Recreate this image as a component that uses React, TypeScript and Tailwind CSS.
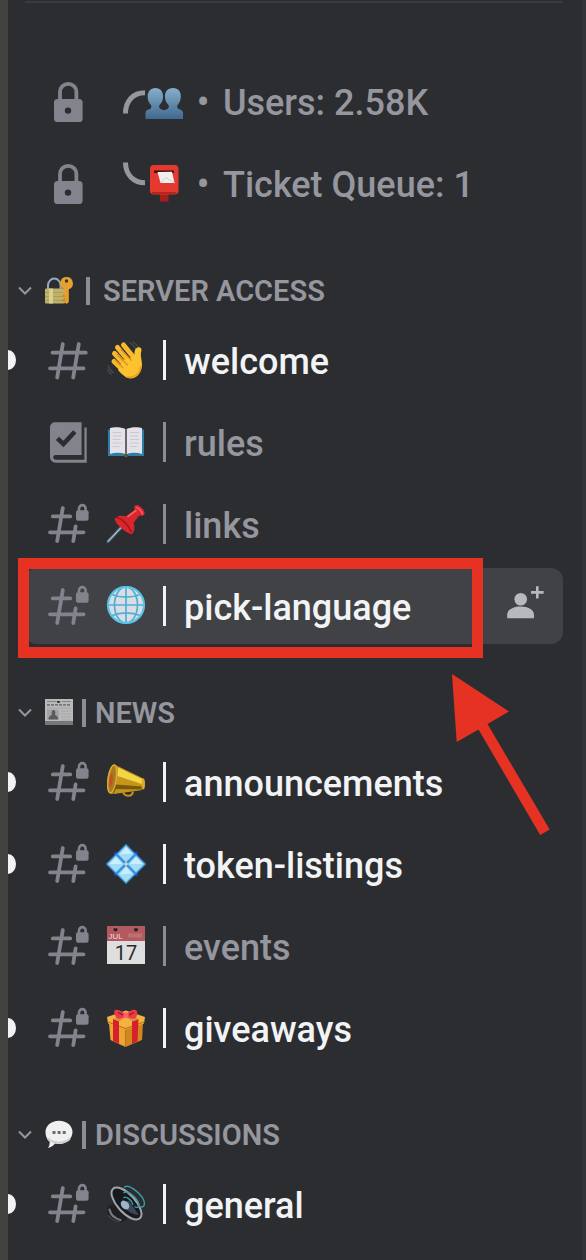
import React from "react";
import clsx from "clsx";

type IconProps = { children: React.ReactNode };

const ChannelIcon = ({ children }: IconProps) => (
  <svg viewBox="0 0 44 44" className="h-11 w-11 shrink-0 text-[#82838d]" fill="none" aria-hidden="true">
    {children}
  </svg>
);

const LockIcon = () => (
  <ChannelIcon>
    <path d="M14 22V12a8.2 8.2 0 0 1 16.4 0v10" stroke="currentColor" strokeWidth="3.8" />
    <rect x="8" y="19" width="28.6" height="23" rx="3.6" fill="currentColor" />
    <circle cx="22" cy="30.6" r="3.2" fill="#2c2d31" />
  </ChannelIcon>
);

const HashIcon = () => (
  <ChannelIcon>
    <path
      d="M16.8 6 11.2 39.5M32.8 6l-5.6 33.5M6.5 14.7h33.3M4 30.3h33.5"
      stroke="currentColor"
      strokeWidth="3.8"
      strokeLinecap="round"
    />
  </ChannelIcon>
);

const HashLockIcon = () => (
  <ChannelIcon>
    <path
      d="M16.8 6 11.2 39M29.6 24.5 27.3 39M6.8 14.4h17.4M4 30.3h33.5"
      stroke="currentColor"
      strokeWidth="3.8"
      strokeLinecap="round"
    />
    <path d="M33 10V6.4a3.3 3.3 0 0 1 6.6 0V10" stroke="currentColor" strokeWidth="2.6" />
    <rect x="30" y="8.2" width="12.6" height="10.6" rx="2" fill="currentColor" />
  </ChannelIcon>
);

const RulesIcon = () => (
  <ChannelIcon>
    <path
      d="M9 2.3h26.6v32.6H9.6a2.4 2.4 0 0 0 0 4.9h28.8V7.5h2.3v35.2H9.5A5.5 5.5 0 0 1 4 37.2V7.3a5 5 0 0 1 5-5Z"
      fill="currentColor"
    />
    <path d="m11.4 18.4 6 5.6L28.8 11.8" stroke="#2c2d31" strokeWidth="4.6" />
  </ChannelIcon>
);

const Emoji = ({ children }: IconProps) => (
  <svg viewBox="0 0 40 40" className="h-10 w-10 shrink-0" fill="none" aria-hidden="true">
    {children}
  </svg>
);

const Wave = () => (
  <Emoji>
    <g stroke="#4a4b4f" strokeWidth="1.2" strokeLinecap="round">
      <path d="M24 3c3 1.6 5 4 6 7M26.8 2c2.6 1.3 4.6 3.2 5.8 6M2.3 25.500c.7 3 2.400 5.400 5.200 7M1.400 29.500c.8 2 2 3.500 3.800 4.600" />
    </g>
    <g stroke="#f9b92d" strokeWidth="5" strokeLinecap="round">
      <path d="M17.500 5 29 19M11.500 7.500l15 18M8.500 13.500 22 28M8 21.500 19 32" />
    </g>
    <path
      d="M17 20 28 16.500c.8-1.700 0-4 1-6.500.8-2.300 3-3.300 5-2.600 1.900.7 1.700 2.800 1.100 4.600-1 3.500.8 7.600.9 12.500.1 8-5.200 14-11.500 14-4 0-7.500-3-12.500-8.500Z"
      fill="#fcc230"
    />
    <path d="m15 9.500 10.500 11M11 14.500l10.500 10.500M9.500 20.500 17 28" stroke="#dd9018" strokeWidth="1.100" strokeLinecap="round" />
    <path d="M21 37c7 1.500 13-3 13.700-10" stroke="#eb9c20" strokeWidth="1.600" strokeLinecap="round" />
  </Emoji>
);

const Book = () => (
  <Emoji>
    <path d="M2 7.500h36v26.500H22l-2 1.500-2-1.500H2Z" fill="#2f7ca6" />
    <path d="M4 6C8 4.800 15 4.800 19.500 7v25c-5-1.600-10.500-1.600-15.500 0Z" fill="#e4e2e8" />
    <path d="M36 6c-4-1.200-11-1.200-15.500 1v25c5-1.600 10.500-1.600 15.500 0Z" fill="#e4e2e8" />
    <path d="M20 7v25" stroke="#66666b" strokeWidth="2" />
    <path
      d="M6.500 10.500h9M6.500 14h9M6.500 17.500h8M6.500 21h9M6.500 24.500h7M24 10.500h9M24 14h8M24 17.500h9M24 21h9M24 24.500h7"
      stroke="#cac8d0"
      strokeWidth="1"
    />
    <path d="M17.500 32.500h5l-1 2h-3Z" fill="#5b5418" />
  </Emoji>
);

const Pin = () => (
  <Emoji>
    <path d="m2 37.500 15-16" stroke="#5d8191" strokeWidth="2.600" strokeLinecap="round" />
    <path d="m2 37.500 15-16" stroke="#c9dbe2" strokeWidth=".9" />
    <path
      d="M28 3c1-2.500 4-2.800 7.200.2 3.300 3 4.500 6.500 2.300 8-1.500 1-3 .6-4.300.3l-5.700 7.500c1.800 4.500.9 9.500-1.700 11.300C20 29 10.500 21.500 8.500 15c1.500-3 6.500-4.200 11.500-2.700L28.500 6Z"
      fill="#d9262e"
    />
    <path d="M10 13.800c5 .2 12 6 15.500 14.500" stroke="#a3151f" strokeWidth="1.600" />
    <path d="m22 12.500 8-6M30.500 3.500c2 .5 5.500 4 6 6.500" stroke="#f4605d" strokeWidth="1.600" strokeLinecap="round" />
  </Emoji>
);

const Globe = () => (
  <Emoji>
    <circle cx="20" cy="19" r="18" fill="#dbdde4" />
    <g stroke="#4fb0d3" strokeWidth="1.700">
      <path d="M20 1v36M2 19h36M6 8.500c8 3.500 20 3.500 28 0M6 29.500c8-3.500 20-3.500 28 0" />
      <ellipse cx="20" cy="19" rx="11.500" ry="18" />
    </g>
    <circle cx="20" cy="19" r="18" stroke="#58c4e6" strokeWidth="2.200" />
  </Emoji>
);

const Megaphone = () => (
  <Emoji>
    <path d="M17 28.500c0 6 9 7.500 10 1" stroke="#c59113" strokeWidth="2" />
    <path d="M8.500 2C4 3 .8 13 1 23.500c.2 6 2.300 9 5.300 8.300l29.500-4.300c2.600-.8 3.500-10 1.500-11L11.500 4Z" fill="#c8951b" />
    <path d="m12 5.500 25 12c-.3 2-.8 3.500-1.200 4.500L11.500 14Z" fill="#f3d548" />
    <path d="m9 22.500 27.500 2-1 3L7 31.500Z" fill="#7a580c" />
    <path d="m10 27 26 .5-1 .8L7.500 32Z" fill="#c4941f" />
    <ellipse cx="6.200" cy="17" rx="4" ry="14" transform="rotate(8 6.200 17)" fill="#a57a22" stroke="#d9ac33" strokeWidth="1.400" />
    <ellipse cx="5" cy="18" rx="1.800" ry="7" transform="rotate(8 5 18)" fill="#c6502a" />
    <ellipse cx="37.300" cy="22" rx="1.700" ry="5.500" fill="#dcaa2c" />
  </Emoji>
);

const Diamond = () => (
  <Emoji>
    <path d="M9 9h4v4H9ZM27 9h4v4h-4ZM9 27h4v4H9ZM27 27h4v4h-4Z" fill="#1746a8" stroke="#1746a8" strokeWidth="2" />
    <path
      d="m20 .8 9 9.200-9 9.200-9-9.200ZM20 20.800l9 9.200-9 9.200-9-9.200ZM10 10.800l9.200 9.200-9.200 9.200L.8 20ZM30 10.800l9.200 9.200-9.200 9.200-9.200-9.200Z"
      fill="#a2ddf8"
      stroke="#3b95dc"
      strokeWidth="1.400"
    />
    <path d="m20 3 6 6.500-12 1ZM10 13l6 7H3.500ZM30 13l6.500 7H24ZM20 23l6 6.500-12 1Z" fill="#c9effc" />
    <circle cx="20" cy="20" r="1.800" fill="#dcd5d0" />
  </Emoji>
);

const Calendar = () => (
  <Emoji>
    <rect x="1" y="0" width="38" height="38" fill="#dedede" />
    <rect x="1" y="0" width="38" height="15" fill="#b25a5f" />
    <circle cx="9.500" cy="3.500" r="2" fill="#2a1f22" />
    <circle cx="30" cy="3.500" r="2" fill="#2a1f22" />
    <path d="M9.500 0v2.500M30 0v2.500" stroke="#8b898c" strokeWidth="1.200" />
    <text x="2.500" y="12.500" fontSize="8" fontFamily="Liberation Sans, sans-serif" fill="#efdcdc">
      JUL
    </text>
    <path d="M22 9.500h14" stroke="#bd7175" strokeWidth="4" />
    <text x="20" y="34" textAnchor="middle" fontSize="20" fontFamily="Roboto, sans-serif" fill="#2b2b2d">
      17
    </text>
  </Emoji>
);

const Gift = () => (
  <Emoji>
    <path d="m3 15 16.500 6v18L4.500 32Z" fill="#eda431" />
    <path d="m37 15-17.500 6v18L36 32Z" fill="#d2871e" />
    <path d="M1 9 20 2.500 39 9l-1 6.500-18.500 6L2 15.500Z" fill="#f2b340" />
    <path d="m2 14 17.500 6.500L38 14" stroke="#b56c13" strokeWidth="1" />
    <path d="m7 11 6 2.200v22.900l-6-3.300ZM32.500 11l-6.500 2.200V36l5.500-2.700Z" fill="#d6202b" />
    <path d="m7 11 12-6 6 1-12 7.500ZM33 11 21 5l-5 2 10.500 6.500Z" fill="#e0903a" />
    <path d="M20 6.500C15 2 10 .8 8.500 2.500c-1 2.500 1 7 3 8 3 .6 6-.8 8.500-2.500 2.500 2 6 3 9 2.500 2-1.500 3-5.500 1.500-8C28 .8 24.500 2 20 6.500Z" fill="#ec3a49" />
    <path d="m12 4.500 5 2.500M28 4.500 23 7" stroke="#9f1220" strokeWidth="1.300" />
    <rect x="17.500" y="4.500" width="5" height="5.500" rx="1.500" fill="#ff5d69" />
  </Emoji>
);

const Speaker = () => (
  <Emoji>
    <path d="M2 22.500 9 19l13 15-4.500 3.500c-4 1.500-11.500.2-14.300-4.500C.8 29.500 1 25.500 2 22.500Z" fill="#1f2023" />
    <path d="M3.500 25.500c1 4.500 5 9 11 10.500" stroke="#77797c" strokeWidth="2.200" strokeLinecap="round" />
    <path d="M2.500 31.500c2.500 3.500 6 5.800 10.500 6" stroke="#4c4d50" strokeWidth="1.200" strokeLinecap="round" />
    <ellipse cx="20.500" cy="19.500" rx="9" ry="20" transform="rotate(-42 20.500 19.500)" fill="#17191d" stroke="#a0a5aa" strokeWidth="2" />
    <path d="m17 18 6-1 10 14c-5 0-11-3-16-8Z" fill="#394756" />
    <ellipse cx="19" cy="21" rx="3.600" ry="5" transform="rotate(-42 19 21)" fill="#9db5cb" />
    <g stroke="#3c98a5" strokeWidth="1.400">
      <path d="M18 3.500c4.500-5 20 8 20.500 16 .2 3.500-3 4.300-6 2.500" />
      <path d="M17.500 9c4-4 15 6 15.500 12 .1 2.500-2.500 3-4.500 1.500" />
      <path d="M17.500 14c2.500-3 9 3 9.500 7" />
    </g>
  </Emoji>
);

const SmallEmoji = ({ children }: IconProps) => (
  <svg viewBox="0 0 30 30" className="h-[30px] w-[30px] shrink-0" fill="none" aria-hidden="true">
    {children}
  </svg>
);

const LockKey = () => (
  <SmallEmoji>
    <path d="M4 14V9.500a6.300 7 0 0 1 12.600 0V14" stroke="#8fabbd" strokeWidth="2" />
    <rect x="1" y="12.500" width="20" height="15" rx="1" fill="#bdb268" />
    <path d="M1 16.500h20M1 20.500h20M1 24.500h20" stroke="#a99f58" strokeWidth="1" />
    <path d="M5 12.500h4v15H5Z" fill="#d8d08c" />
    <path d="M22.500 1a6.300 6.300 0 0 1 2.300 12.200V26l-2 2-2.500-2V13.200A6.300 6.300 0 0 1 22.500 1Z" fill="#e5a02f" />
    <path d="M20.500 18.500h-2V21h2v2h-2v2.500h3Z" fill="#d08717" />
    <circle cx="22.500" cy="5" r="1.700" fill="#3a3326" />
  </SmallEmoji>
);

const Newspaper = () => (
  <SmallEmoji>
    <rect x="1" y="1" width="28" height="26" fill="#b9b9b9" />
    <path d="M1 23h28v4H1Z" fill="#77777a" />
    <path d="M3 3.500h9M18 3.500h9" stroke="#858587" strokeWidth="1" />
    <path d="M3 6.800h24" stroke="#77777a" strokeWidth="1.800" strokeDasharray="3 1" />
    <path d="M12.500 3h4l-1 2h-2Z" fill="#37373a" />
    <path d="M3 10h24M17 13h10M17 16h10M17 19h10M17 22h10" stroke="#a6a6a9" strokeWidth="1" />
    <rect x="3" y="11.500" width="12" height="10" fill="#a3a3a5" />
    <path d="M4.500 21.500c0-3 2-4.500 3.500-4.500-1-3 0-5 1.500-5s2.500 2 1.500 5c2 .5 3 2 3 4.500Z" fill="#5a5a5d" />
  </SmallEmoji>
);

const Bubble = () => (
  <SmallEmoji>
    <path d="M15 .8c8 0 13.500 5 13.500 11.300S23 24 15 24c-1.500 0-2.800-.2-4-.4-1.500 2-4 4-7 4.400 1-1.500 1.700-3.500 1.700-6C3 19.500 1.500 16.300 1.500 12.100 1.500 5.800 7 .8 15 .8Z" fill="#f0f0f0" />
    <path d="M4 18.500c5 5.500 17 5.500 22 0" stroke="#cfcfd1" strokeWidth="2" />
    <path d="M8.500 11h3v3h-3ZM13.600 11h3v3h-3ZM18.700 11h3v3h-3Z" fill="#6b6b6f" />
  </SmallEmoji>
);

const People = () => (
  <svg viewBox="0 0 38 38" className="h-[38px] w-[38px] shrink-0" aria-hidden="true">
    <defs>
      <linearGradient id="people" x1="0" y1="0" x2="0" y2="1">
        <stop offset="0" stopColor="#86afcb" />
        <stop offset="1" stopColor="#41688f" />
      </linearGradient>
    </defs>
    <path
      d="M10.500 5c5 0 8 4 7.500 9.500-.3 4-2 6-3.500 7.500-.8 1.800-.3 3.500 1.500 4.200 1 .3 2 .6 3 1 1-.4 2-.7 3-1 1.800-.7 2.300-2.400 1.500-4.200-1.500-1.500-3.200-3.500-3.500-7.500C19.500 9 22.500 5 28 5s8.300 4 7.800 9.500c-.3 4-2 6-3.300 7.500-.8 1.800-.3 3.500 1.500 4.200 2.500.8 4 1.600 4 3.800v6H.5v-6c0-2.200 1.500-3 4-3.800 1.800-.7 2.300-2.400 1.500-4.200-1.500-1.500-3-3.500-3.300-7.500C2.200 9 5.500 5 10.500 5Z"
      fill="url(#people)"
    />
  </svg>
);

const Postbox = () => (
  <svg viewBox="0 0 38 38" className="h-[38px] w-[38px] shrink-0" aria-hidden="true">
    <path d="M15 28h8.500v8.500H15Z" fill="#a81d1a" />
    <rect x="5" y="0" width="28.500" height="29.500" rx="4" fill="#e43a2e" />
    <path d="M7 28h24.500" stroke="#b7231d" strokeWidth="2" />
    <rect x="9" y="5.500" width="20" height="2.600" rx="1" fill="#3d0b0b" />
    <path d="m12.500 7 14.500-.3 2.500 11.300H15.500Z" fill="#f0eff0" />
    <path d="m15.500 18 5.500-5.500 8.500 5.500" stroke="#d3cfd0" fill="none" />
  </svg>
);

type Channel = {
  name: string;
  icon: () => React.JSX.Element;
  emoji: () => React.JSX.Element;
  unread?: boolean;
  selected?: boolean;
};

type Category = {
  name: string;
  emoji: () => React.JSX.Element;
  wide?: boolean;
  channels: Channel[];
};

const stats = [
  { label: "Users: 2.58K", emoji: People, arc: "M2.500 23.500C2.500 11 10 2.800 22 2.800", align: "items-center" },
  { label: "Ticket Queue: 1", emoji: Postbox, arc: "M2.500 .5C2.500 12 10 20.800 22 20.800", align: "items-start" },
];

const categories: Category[] = [
  {
    name: "SERVER ACCESS",
    emoji: LockKey,
    wide: true,
    channels: [
      { name: "welcome", icon: HashIcon, emoji: Wave, unread: true },
      { name: "rules", icon: RulesIcon, emoji: Book },
      { name: "links", icon: HashLockIcon, emoji: Pin },
      { name: "pick-language", icon: HashLockIcon, emoji: Globe, selected: true },
    ],
  },
  {
    name: "NEWS",
    emoji: Newspaper,
    channels: [
      { name: "announcements", icon: HashLockIcon, emoji: Megaphone, unread: true },
      { name: "token-listings", icon: HashLockIcon, emoji: Diamond, unread: true },
      { name: "events", icon: HashLockIcon, emoji: Calendar },
      { name: "giveaways", icon: HashLockIcon, emoji: Gift, unread: true },
    ],
  },
  {
    name: "DISCUSSIONS",
    emoji: Bubble,
    channels: [{ name: "general", icon: HashLockIcon, emoji: Speaker, unread: true }],
  },
];

/**
 * Red frame and arrow pointing at the selected channel
 */
const Callout = () => (
  <>
    <div className="pointer-events-none absolute -top-[10px] right-[99px] left-[10px] h-[100px] border-[11px] border-[#e53223]" />
    <svg
      viewBox="0 0 98 162"
      className="pointer-events-none absolute top-[106px] right-8 z-10 h-[162px] w-[98px]"
      aria-hidden="true"
    >
      <path d="M0 0 57 37.500 35.500 50l62.200 105.500-9.500 5.500L26.500 55.500 4.700 68Z" fill="#e53223" />
    </svg>
  </>
);

const ChannelRow = ({ channel }: { channel: Channel }) => {
  const { name, icon: Icon, emoji: EmojiIcon, unread, selected } = channel;
  const bright = unread || selected;

  return (
    <li className="relative flex items-center pr-[19px]">
      <span className={clsx("mr-[9px] h-5 w-2 rounded-[0_100%_100%_0/0_50%_50%_0]", unread && "bg-[#f2f3f5]")} />
      <div
        className={clsx(
          "flex h-[76px] min-w-0 flex-1 items-center rounded-xl pr-[15px] pl-[21px]",
          selected && "bg-[#414246]"
        )}
      >
        <a href={`#${name}`} className="flex min-w-0 flex-1 items-center">
          <Icon />
          <span className="mr-[17px] ml-4 flex">
            <EmojiIcon />
          </span>
          <span className={clsx("mr-[18px] h-10 w-[3px]", bright ? "bg-[#f2f3f5]" : "bg-[#8b8c94]")} />
          <span
            className={clsx(
              "pt-1 text-[36px] leading-[44px] font-medium whitespace-nowrap",
              bright ? "text-[#f2f3f5]" : "text-[#95969e]"
            )}
          >
            {name}
          </span>
        </a>
        {selected && (
          <button type="button" aria-label="Create invite" className="shrink-0">
            <svg viewBox="0 0 44 44" className="h-11 w-11" fill="#b8b9be">
              <circle cx="16.700" cy="15.300" r="6.300" />
              <path d="M3.200 34.200v-3.500c0-5 6-8.200 13.400-8.200S30 25.700 30 30.700v3.500Z" />
              <path d="M32 2.200h2.600v4.900h5v2.600h-5v4.900H32V9.700h-5V7.100h5Z" />
            </svg>
          </button>
        )}
      </div>
      {selected && <Callout />}
    </li>
  );
};

export default function App() {
  return (
    <div
      className="flex h-screen overflow-hidden border-r-4 border-l-8 border-r-[#323338] border-l-[#424241] bg-[#2c2d31]"
      style={{ fontFamily: "Roboto, 'Noto Sans', sans-serif" }}
    >
      <nav className="min-w-0 flex-1 pt-px">
        <hr className="mr-[19px] ml-[17px] h-[2px] border-0 bg-[#3a3b3f]" />

        <ul className="mt-[61px] flex flex-col gap-[6px]">
          {stats.map(({ label, emoji: StatEmoji, arc, align }) => (
            <li key={label} className="flex h-[76px] items-center pl-[38px]">
              <LockIcon />
              <span className={clsx("ml-[33px] flex h-11", align)}>
                <svg viewBox="0 0 22 24" className="h-6 w-[22px]" fill="none" stroke="#95969e" strokeWidth="5" aria-hidden="true">
                  <path d={arc} />
                </svg>
              </span>
              <StatEmoji />
              <span className="w-10 text-center text-[36px] leading-[44px] font-medium text-[#95969e]">•</span>
              <span className="pt-[2px] text-[36px] leading-[44px] font-medium whitespace-nowrap text-[#95969e]">{label}</span>
            </li>
          ))}
        </ul>

        {categories.map(({ name, emoji: CategoryEmoji, wide, channels }) => (
          <section key={name}>
            <button type="button" aria-expanded="true" className="mt-[52px] mb-[14px] flex h-[34px] items-center pl-[10px] text-[#95969e]">
              <svg viewBox="0 0 14 10" className="mr-3 h-[10px] w-[14px]" fill="none" stroke="currentColor" strokeWidth="2" aria-hidden="true">
                <path d="m1 1.500 6 6 6-6" />
              </svg>
              <CategoryEmoji />
              <span className={clsx("h-7 w-1 bg-[#8b8c94]", wide ? "mr-[13px] ml-3" : "mr-[9px] ml-2")} />
              <span className="text-[29px] leading-[34px] font-semibold">{name}</span>
            </button>
            <ul className="flex flex-col gap-[6px]">
              {channels.map((channel) => (
                <ChannelRow key={channel.name} channel={channel} />
              ))}
            </ul>
          </section>
        ))}
      </nav>
    </div>
  );
}
